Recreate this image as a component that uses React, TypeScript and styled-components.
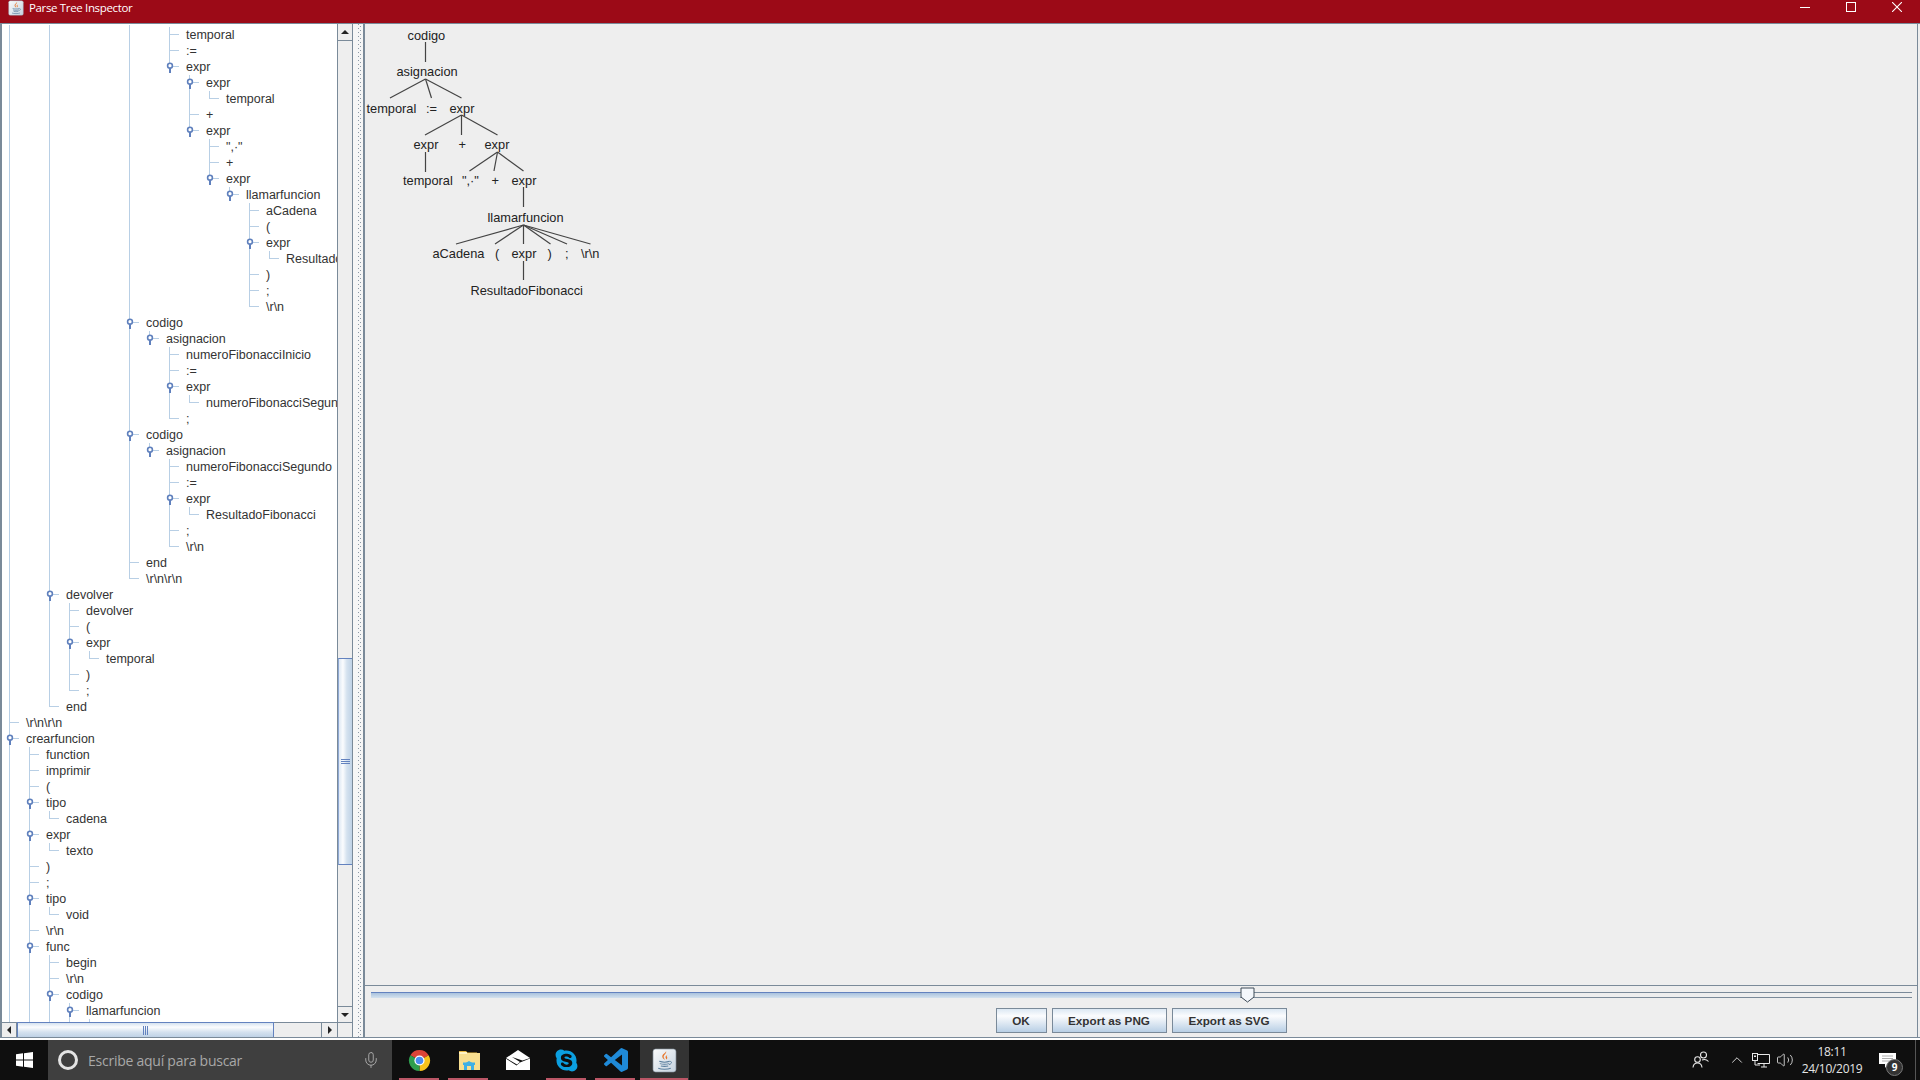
import React from 'react';
import styled, { createGlobalStyle } from 'styled-components';
import { FaSkype } from 'react-icons/fa';
import { Mic, Volume2, ChevronUp } from 'lucide-react';

const GlobalStyle = createGlobalStyle`
  html, body { margin: 0; padding: 0; background: #fff; overflow: hidden; }
  * { box-sizing: border-box; }
`;

const Page = styled.div`
  width: 1920px;
  height: 1080px;
  display: flex;
  flex-direction: column;
  background: #fff;
  font-family: "Liberation Sans", Arial, sans-serif;
  overflow: hidden;
`;

/* ---------- title bar ---------- */
const TitleBar = styled.header`
  flex: none;
  height: 23px;
  background: #9c0a17;
  display: flex;
  align-items: flex-start;
  padding-left: 8px;
  color: #fff;
`;
const TitleIcon = styled.div`
  width: 16px;
  height: 16px;
  margin-right: 5px;
  line-height: 0;
`;
const TitleText = styled.span`
  font: 11.5px/16px "Open Sans", "Liberation Sans", sans-serif;
  letter-spacing: -0.35px;
`;
const WindowButtons = styled.div`
  margin-left: auto;
  display: flex;
`;
const WindowButton = styled.div`
  width: 46px;
  height: 14px;
  display: flex;
  align-items: center;
  justify-content: center;
`;

/* ---------- workspace ---------- */
const Workspace = styled.main`
  flex: none;
  height: 1015px;
  display: flex;
  border-top: 1px solid #7a8a99;
  padding-right: 2px;
  background: #eee;
  border-bottom: 1px solid #7a8a99;
`;
const LeftPane = styled.section`
  flex: none;
  width: 353px;
  display: flex;
  flex-direction: column;
  border-left: 2px solid #7a8a99;
`;
const TreeArea = styled.div`
  flex: 1;
  min-height: 0;
  display: flex;
`;
const TreeViewport = styled.div`
  flex: 1;
  min-width: 0;
  background: #fff;
  overflow: hidden;
  border-top: 1px solid #fff;
`;
const TreeList = styled.ul`
  list-style: none;
  margin: -14px 0 0 -2px;
  padding: 0;
`;
const Row = styled.li`
  height: 16px;
  display: flex;
  white-space: nowrap;
`;
const GuideCell = styled.span<{ $line: boolean }>`
  flex: none;
  width: 20px;
  height: 16px;
  background: ${p => (p.$line ? 'linear-gradient(#b8cfe5, #b8cfe5) 9px 0 / 1px 100% no-repeat' : 'none')};
`;
const ElbowCell = styled.span<{ $down: boolean }>`
  flex: none;
  width: 20px;
  height: 16px;
  position: relative;
  background:
    linear-gradient(#b8cfe5, #b8cfe5) 9px 0 / 1px ${p => (p.$down ? '100%' : '8px')} no-repeat,
    linear-gradient(#b8cfe5, #b8cfe5) 9px 7px / 10px 1px no-repeat;
`;
const NodeHandle = styled.svg`
  position: absolute;
  left: 5px;
  top: 2px;
`;
const NodeLabel = styled.span`
  margin-left: 6px;
  font-size: 12.5px;
  line-height: 16px;
  color: #333;
`;

/* ---------- scroll bars ---------- */
const VScroll = styled.div`
  flex: none;
  width: 16px;
  display: flex;
  flex-direction: column;
  border-left: 1px solid #7a8a99;
  border-right: 1px solid #7a8a99;
  background: #eee;
`;
const ArrowButton = styled.div<{ $w?: number; $h?: number; $line?: string }>`
  flex: none;
  width: ${p => (p.$w ? `${p.$w}px` : 'auto')};
  height: ${p => (p.$h ? `${p.$h}px` : 'auto')};
  display: flex;
  align-items: center;
  justify-content: center;
  background: #eee;
  ${p => p.$line}
`;
const VTrack = styled.div`
  flex: 1;
  min-height: 0;
`;
const VThumb = styled.div`
  margin-top: 617px;
  height: 207px;
  border-top: 1px solid #6382bf;
  border-bottom: 1px solid #6382bf;
  border-left: 1px solid #8ea8d4;
  background: linear-gradient(90deg, #dfe9f4 0%, #fbfcfe 30%, #d5e2ef 60%, #bfd2e6 100%);
  display: flex;
  align-items: center;
  justify-content: center;
`;
const GripV = styled.div`
  width: 9px;
  height: 5px;
  background: repeating-linear-gradient(#6382bf 0 1px, transparent 1px 2px);
`;
const HScroll = styled.div`
  flex: none;
  height: 15px;
  display: flex;
  border-top: 1px solid #7a8a99;
`;
const HTrack = styled.div`
  flex: 1;
  display: flex;
  background: #eee;
`;
const HThumb = styled.div`
  width: 257px;
  border-left: 1px solid #6382bf;
  border-right: 1px solid #6382bf;
  border-top: 1px solid #6382bf;
  margin-top: -1px;
  background: linear-gradient(#d5e2ef 0%, #fbfcfe 30%, #d5e2ef 65%, #bfd2e6 100%);
  display: flex;
  align-items: center;
  justify-content: center;
`;
const GripH = styled.div`
  width: 5px;
  height: 9px;
  background: repeating-linear-gradient(90deg, #6382bf 0 1px, transparent 1px 2px);
`;
const Corner = styled.div`
  flex: none;
  width: 16px;
  background: #eee;
  border-left: 1px solid #7a8a99;
  border-right: 1px solid #7a8a99;
`;

/* ---------- splitter ---------- */
const Splitter = styled.div`
  flex: none;
  width: 10px;
  background-color: #f6f6f6;
  background-image:
    linear-gradient(#8c99a6 0 1px, transparent 1px),
    linear-gradient(#8c99a6 0 1px, transparent 1px);
  background-size: 1px 4px, 1px 4px;
  background-position: 5px 0, 7px 2px;
  background-repeat: repeat-y;
`;

/* ---------- right pane ---------- */
const RightPane = styled.section`
  flex: 1;
  min-width: 0;
  display: flex;
  flex-direction: column;
  border-left: 2px solid #7a8a99;
  border-right: 1px solid #7a8a99;
`;
const Canvas = styled.div`
  flex: 1;
  min-height: 0;
  background: #eee;
  border-bottom: 1px solid #7a8a99;
  overflow: hidden;
  line-height: 0;
`;
const Diagram = styled.svg`
  display: block;
`;
const DiagramEdge = styled.line`
  stroke: #444;
  stroke-width: 1.2;
`;
const DiagramLabel = styled.text`
  font: 12.8px "Liberation Sans", Arial, sans-serif;
  fill: #222;
`;
const Controls = styled.div`
  flex: none;
  height: 51px;
  display: flex;
  flex-direction: column;
  align-items: stretch;
`;
const SliderRow = styled.div`
  position: relative;
  height: 22px;
  padding: 6px 5px 0 6px;
`;
const SliderTrack = styled.div`
  height: 6px;
  display: flex;
  border-top: 1px solid #7a8a99;
  border-bottom: 1px solid #7a8a99;
`;
const SliderFill = styled.div`
  margin-top: -1px;
  height: 6px;
  border-top: 1px solid #6382bf;
  background: linear-gradient(#a9c2dd, #d5e2ef);
`;
const SliderThumb = styled.svg`
  position: absolute;
  top: 1px;
  left: 875px;
`;
const ButtonRow = styled.div`
  display: flex;
  justify-content: center;
  gap: 5px;
`;
const ActionButton = styled.button<{ $w: number }>`
  width: ${p => p.$w}px;
  height: 25px;
  padding: 0;
  border: 1px solid #7a8a99;
  background: linear-gradient(#dce8f3 0%, #fbfcfe 30%, #dfe9f3 60%, #b8cfe5 100%);
  font: bold 11.7px "Liberation Sans", Arial, sans-serif;
  color: #333;
`;

/* ---------- taskbar ---------- */
const Taskbar = styled.footer`
  margin-top: 2px;
  flex: none;
  height: 40px;
  background: #0f0f0f;
  display: flex;
  align-items: stretch;
`;
const StartButton = styled.div`
  flex: none;
  width: 48px;
  display: flex;
  align-items: center;
  justify-content: center;
`;
const SearchBox = styled.div`
  flex: none;
  width: 344px;
  background: #3f3f3f;
  display: flex;
  align-items: center;
  padding-left: 10px;
  padding-right: 12px;
`;
const CortanaRing = styled.div`
  width: 20px;
  height: 20px;
  border-radius: 50%;
  border: 3px solid #e4e4e4;
  margin-right: 10px;
`;
const SearchText = styled.span`
  flex: 1;
  font: 14px "Open Sans", "Liberation Sans", sans-serif;
  letter-spacing: -0.25px;
  color: #a8a8a8;
`;
const TaskButtons = styled.div`
  display: flex;
  padding-left: 3px;
`;
const TaskButton = styled.div<{ $active?: boolean; $open?: boolean }>`
  flex: none;
  width: 49px;
  position: relative;
  display: flex;
  align-items: center;
  justify-content: center;
  background: ${p => (p.$active ? '#333' : 'transparent')};
  &::after {
    content: '';
    display: ${p => (p.$open ? 'block' : 'none')};
    position: absolute;
    bottom: 0;
    height: 2px;
    left: ${p => (p.$active ? '0' : '4px')};
    right: ${p => (p.$active ? '1px' : '5px')};
    background: #bb5666;
  }
`;
const Tray = styled.div`
  margin-left: auto;
  flex: none;
  width: 231px;
  display: flex;
  color: #e8e8e8;
`;
const TrayItem = styled.div<{ $w: number; $gap?: number }>`
  flex: none;
  width: ${p => p.$w}px;
  margin-left: ${p => p.$gap ?? 0}px;
  display: flex;
  align-items: center;
  justify-content: center;
`;
const Clock = styled.div`
  flex: none;
  width: 70px;
  display: flex;
  flex-direction: column;
  align-items: center;
  justify-content: center;
  gap: 3px;
  font: 12px/14px "Open Sans", "Liberation Sans", sans-serif;
  letter-spacing: -0.3px;
  color: #e4e4e4;
`;
const NotifyButton = styled.div`
  flex: none;
  width: 40px;
  position: relative;
  display: flex;
  align-items: center;
  justify-content: center;
`;
const NotifyBadge = styled.span`
  position: absolute;
  left: 19px;
  top: 19px;
  width: 17px;
  height: 17px;
  border-radius: 50%;
  background: #333;
  border: 1px solid #777;
  color: #fff;
  font: bold 10px/15px "Open Sans", sans-serif;
  text-align: center;
`;
const ShowDesktop = styled.div`
  flex: none;
  width: 13px;
  margin-left: 0;
  padding-left: 8px;
  &::before {
    content: '';
    display: block;
    width: 1px;
    height: 100%;
    background: #555;
  }
`;

/* ---------- data ---------- */
type TreeRow = [number, string, boolean?];
const rows: TreeRow[] = [
  [7, ''],
  [8, 'temporal'], [8, ':='], [8, 'expr', true], [9, 'expr', true], [10, 'temporal'], [9, '+'],
  [9, 'expr', true], [10, '",·"'], [10, '+'], [10, 'expr', true], [11, 'llamarfuncion', true],
  [12, 'aCadena'], [12, '('], [12, 'expr', true], [13, 'ResultadoFibonacci'], [12, ')'], [12, ';'], [12, '\\r\\n'],
  [6, 'codigo', true], [7, 'asignacion', true], [8, 'numeroFibonacciInicio'], [8, ':='], [8, 'expr', true],
  [9, 'numeroFibonacciSegundo'], [8, ';'],
  [6, 'codigo', true], [7, 'asignacion', true], [8, 'numeroFibonacciSegundo'], [8, ':='], [8, 'expr', true],
  [9, 'ResultadoFibonacci'], [8, ';'], [8, '\\r\\n'],
  [6, 'end'], [6, '\\r\\n\\r\\n'],
  [2, 'devolver', true], [3, 'devolver'], [3, '('], [3, 'expr', true], [4, 'temporal'], [3, ')'], [3, ';'],
  [2, 'end'], [0, '\\r\\n\\r\\n'], [0, 'crearfuncion', true],
  [1, 'function'], [1, 'imprimir'], [1, '('], [1, 'tipo', true], [2, 'cadena'], [1, 'expr', true], [2, 'texto'],
  [1, ')'], [1, ';'], [1, 'tipo', true], [2, 'void'], [1, '\\r\\n'], [1, 'func', true],
  [2, 'begin'], [2, '\\r\\n'], [2, 'codigo', true], [3, 'llamarfuncion', true], [4, ''],
];
const tailOpen = [0, 1, 2, 3, 4];

const hasNext = (i: number, level: number) => {
  for (let j = i + 1; j < rows.length; j++) {
    if (rows[j][0] === level) return true;
    if (rows[j][0] < level) return false;
  }
  return tailOpen.includes(level);
};

type Edge = [number, number, number, number];
const OX = 365;
const OY = 24;
const edges: Edge[] = [
  [425.5, 42, 425.5, 62],
  [425.5, 79, 390, 98], [425.5, 79, 431.5, 98], [425.5, 79, 461.5, 98],
  [461.5, 115, 425, 135], [461.5, 115, 461.5, 135], [461.5, 115, 497.5, 135],
  [425.5, 152, 425.5, 172],
  [497.5, 152, 469.5, 171], [497.5, 152, 494, 171], [497.5, 152, 523.5, 171],
  [523.5, 187, 523.5, 207],
  [523.5, 225, 456, 244], [523.5, 225, 495, 244], [523.5, 225, 523.5, 244],
  [523.5, 225, 550.5, 244], [523.5, 225, 567, 244], [523.5, 225, 590.5, 244],
  [523.5, 261, 523.5, 280],
];
const labels: [string, number, number][] = [
  ['codigo', 407.5, 40],
  ['asignacion', 396.5, 76],
  ['temporal', 366.5, 113], [':=', 426, 113], ['expr', 449.5, 113],
  ['expr', 413.5, 149], ['+', 458.5, 149], ['expr', 484.5, 149],
  ['temporal', 403, 185], ['",·"', 462, 185], ['+', 491.5, 185], ['expr', 511.5, 185],
  ['llamarfuncion', 487.5, 222],
  ['aCadena', 432.5, 258], ['(', 495, 258], ['expr', 511.5, 258], [')', 547.5, 258], [';', 565, 258], ['\\r\\n', 581, 258],
  ['ResultadoFibonacci', 470.5, 294.5],
];

/* ---------- drawings ---------- */
const JavaIcon = ({ size }: { size: number }) => (
  <svg width={size} height={size} viewBox="0 0 24 24">
    <defs>
      <linearGradient id="javaBg" x1="0" y1="0" x2="1" y2="1">
        <stop offset="0" stopColor="#fbfbfb" />
        <stop offset="1" stopColor="#c4d2df" />
      </linearGradient>
    </defs>
    <rect x="1" y="1" width="22" height="22" rx="2.5" fill="url(#javaBg)" stroke="#8d9aa6" strokeWidth="0.6" />
    <path d="M13.5 3c1 2-3 3.5-2.2 6 .3 1 1 1.6 1.2 2.4-1.6-1-3-2.2-2.6-4C10.3 5.500 13 5 13.500 3z" fill="#e8762b" />
    <path d="M15 6.500c-1.800 1-2.400 2-1.800 3.200.3.500.4 1 .2 1.400 1.400-.8 1.600-2 .8-3-.3-.5.1-1.100.8-1.600z" fill="#e8762b" />
    <path d="M7 12.800c2.500.8 7.500.8 10 0M7.500 15c2.300.7 6.700.7 9 0M8.500 17.200c2 .5 5 .5 7 0M6 19.500c3 1.200 9 1.200 12 0" fill="none" stroke="#5b7f9e" strokeWidth="1" />
    <path d="M17 13c2.300-.6 2.500 2.200-.8 3" fill="none" stroke="#5b7f9e" strokeWidth="0.9" />
  </svg>
);

const ChromeIcon = () => (
  <svg width="23" height="23" viewBox="0 0 24 24">
    <path d="M12 12L2.470 6.500A11 11 0 0 1 21.530 6.500z" fill="#dc4437" />
    <path d="M12 12L21.530 6.500A11 11 0 0 1 12 23z" fill="#f6c21c" />
    <path d="M12 12L12 23A11 11 0 0 1 2.470 6.500z" fill="#2f9e4f" />
    <circle cx="12" cy="12" r="5.300" fill="#fff" />
    <circle cx="12" cy="12" r="4" fill="#4a8cf0" />
  </svg>
);
const FolderIcon = () => (
  <svg width="24" height="24" viewBox="0 0 24 24">
    <path d="M2 3h7l1.500 1.500H20V8H2z" fill="#e8b53c" />
    <rect x="2" y="5" width="21" height="17" fill="#f8de8f" />
    <rect x="2" y="4" width="8" height="2" fill="#fff3c4" />
    <path d="M7 22v-6l5-3 5 3v6h-3v-4h-4v4z" fill="#3eb0e6" />
    <rect x="6" y="14.500" width="12" height="2.500" fill="#3eb0e6" />
  </svg>
);
const MailIcon = () => (
  <svg width="24" height="22" viewBox="0 0 24 22">
    <path d="M0 9L12 1l12 8-7.500 2.500L6 8l8 5-3 2.500z" fill="#fff" />
    <path d="M0 9.800l10.500 6.700 3.500-3 10 -4V21H0z" fill="#fff" />
  </svg>
);
const VSCodeIcon = () => (
  <svg width="24" height="24" viewBox="0 0 24 24">
    <path
      fill="#1f8ad8"
      d="M23.150 2.587L18.210.21a1.494 1.494 0 0 0-1.705.29l-9.460 8.630-4.120-3.128a.999.999 0 0 0-1.276.057L.327 7.261A1 1 0 0 0 .326 8.740L3.899 12 .326 15.260a1 1 0 0 0 .001 1.479L1.650 17.940a.999.999 0 0 0 1.276.057l4.120-3.128 9.460 8.630a1.492 1.492 0 0 0 1.704.29l4.942-2.377A1.500 1.500 0 0 0 24 20.060V3.939a1.500 1.500 0 0 0-.85-1.352zm-5.146 14.861L10.826 12l7.178-5.448v10.896z"
    />
  </svg>
);
const WindowsLogo = () => (
  <svg width="17" height="16" viewBox="0 0 17 16">
    <path d="M0 2.300L7 1.300V7.500H0zM8 1.200L17 0V7.500H8zM0 8.500H7V14.700L0 13.700zM8 8.500H17V16L8 14.800z" fill="#fff" />
  </svg>
);
const PeopleIcon = () => (
  <svg width="18" height="18" viewBox="0 0 18 18" fill="none" stroke="#e8e8e8" strokeWidth="1.1">
    <circle cx="11.500" cy="4" r="3" />
    <circle cx="5.500" cy="8.500" r="2.800" />
    <path d="M1 16.500c.3-3 2-4.500 4.500-4.500s4.200 1.500 4.500 4.500M10 9c2-.8 4.700-.5 6.500 1.500" />
  </svg>
);
const NetworkIcon = () => (
  <svg width="18" height="15" viewBox="0 0 18 15" fill="none" stroke="#e8e8e8" strokeWidth="1">
    <path d="M5.500 1.500H17.500V10.500H5.500M9 14H15M12 10.500V14" />
    <rect x="0.500" y="0.500" width="5" height="7" fill="#0f0f0f" />
    <path d="M3 7.500V12H8" />
    <rect x="2" y="2.500" width="2" height="1.500" fill="#e8e8e8" stroke="none" />
  </svg>
);

export default function App() {
  return (
    <Page>
      <GlobalStyle />
      <TitleBar>
        <TitleIcon><JavaIcon size={16} /></TitleIcon>
        <TitleText>Parse Tree Inspector</TitleText>
        <WindowButtons>
          <WindowButton>
            <svg width="10" height="1"><rect width="10" height="1" fill="#fff" /></svg>
          </WindowButton>
          <WindowButton>
            <svg width="10" height="10"><rect x="0.500" y="0.500" width="9" height="9" fill="none" stroke="#fff" /></svg>
          </WindowButton>
          <WindowButton>
            <svg width="10" height="10"><path d="M0 0L10 10M10 0L0 10" stroke="#fff" strokeWidth="1.100" /></svg>
          </WindowButton>
        </WindowButtons>
      </TitleBar>

      <Workspace>
        <LeftPane>
          <TreeArea>
            <TreeViewport>
              <TreeList>
                {rows.map(([depth, text, branch], i) => (
                  <Row key={i}>
                    {Array.from({ length: depth }, (_, l) => (
                      <GuideCell key={l} $line={hasNext(i, l)} />
                    ))}
                    <ElbowCell $down={hasNext(i, depth)}>
                      {branch && (
                        <NodeHandle width="10" height="12" viewBox="0 0 10 12">
                          <circle cx="5" cy="4.700" r="2.400" fill="#fff" stroke="#5f80bd" strokeWidth="1.600" />
                          <rect x="4" y="7" width="2" height="5" fill="#5f80bd" />
                        </NodeHandle>
                      )}
                    </ElbowCell>
                    {text && <NodeLabel>{text}</NodeLabel>}
                  </Row>
                ))}
              </TreeList>
            </TreeViewport>
            <VScroll>
              <ArrowButton $h={17} $line="border-bottom: 1px solid #7a8a99;">
                <svg width="8" height="4"><path d="M4 0L8 4H0z" fill="#222" /></svg>
              </ArrowButton>
              <VTrack>
                <VThumb><GripV /></VThumb>
              </VTrack>
              <ArrowButton $h={16} $line="border-top: 1px solid #7a8a99;">
                <svg width="8" height="4"><path d="M0 0H8L4 4z" fill="#222" /></svg>
              </ArrowButton>
            </VScroll>
          </TreeArea>
          <HScroll>
            <ArrowButton $w={15} $line="border-right: 1px solid #7a8a99;">
              <svg width="4" height="8"><path d="M4 0V8L0 4z" fill="#222" /></svg>
            </ArrowButton>
            <HTrack>
              <HThumb><GripH /></HThumb>
            </HTrack>
            <ArrowButton $w={16} $line="border-left: 1px solid #7a8a99;">
              <svg width="4" height="8"><path d="M0 0L4 4L0 8z" fill="#222" /></svg>
            </ArrowButton>
            <Corner />
          </HScroll>
        </LeftPane>

        <Splitter />

        <RightPane>
          <Canvas>
            <Diagram width="400" height="320" viewBox={`${OX} ${OY} 400 320`}>
              {edges.map(([x1, y1, x2, y2], i) => (
                <DiagramEdge key={i} x1={x1} y1={y1} x2={x2} y2={y2} />
              ))}
              {labels.map(([t, x, y], i) => (
                <DiagramLabel key={i} x={x} y={y}>{t}</DiagramLabel>
              ))}
            </Diagram>
          </Canvas>
          <Controls>
            <SliderRow>
              <SliderTrack>
                <SliderFill style={{ width: 869 }} />
              </SliderTrack>
              <SliderThumb width="15" height="16" viewBox="0 0 15 16">
                <path d="M1 1H14V10L7.500 15L1 10z" fill="#f4f7fb" stroke="#3d4a57" strokeWidth="1" />
              </SliderThumb>
            </SliderRow>
            <ButtonRow>
              <ActionButton $w={51}>OK</ActionButton>
              <ActionButton $w={115}>Export as PNG</ActionButton>
              <ActionButton $w={115}>Export as SVG</ActionButton>
            </ButtonRow>
          </Controls>
        </RightPane>
      </Workspace>

      <Taskbar>
        <StartButton><WindowsLogo /></StartButton>
        <SearchBox>
          <CortanaRing />
          <SearchText>Escribe aquí para buscar</SearchText>
          <Mic size={18} color="#a8a8a8" strokeWidth={1.3} />
        </SearchBox>
        <TaskButtons>
          <TaskButton $open><ChromeIcon /></TaskButton>
          <TaskButton $open><FolderIcon /></TaskButton>
          <TaskButton><MailIcon /></TaskButton>
          <TaskButton $open><FaSkype size={25} color="#0b9fe0" /></TaskButton>
          <TaskButton $open><VSCodeIcon /></TaskButton>
          <TaskButton $open $active><JavaIcon size={25} /></TaskButton>
        </TaskButtons>
        <Tray>
          <TrayItem $w={24}><PeopleIcon /></TrayItem>
          <TrayItem $w={24} $gap={12}><ChevronUp size={18} strokeWidth={1.2} /></TrayItem>
          <TrayItem $w={24}><NetworkIcon /></TrayItem>
          <TrayItem $w={24}><Volume2 size={18} strokeWidth={1.1} /></TrayItem>
          <Clock>
            <span>18:11</span>
            <span>24/10/2019</span>
          </Clock>
          <NotifyButton>
            <svg width="17" height="15" viewBox="0 0 17 15">
              <path d="M0 0H17V11H9L6 15V11H0z" fill="#fff" />
              <path d="M3 3H14M3 5.500H14M3 8H14" stroke="#999" strokeWidth="0.8" />
            </svg>
            <NotifyBadge>9</NotifyBadge>
          </NotifyButton>
          <ShowDesktop />
        </Tray>
      </Taskbar>
    </Page>
  );
}
